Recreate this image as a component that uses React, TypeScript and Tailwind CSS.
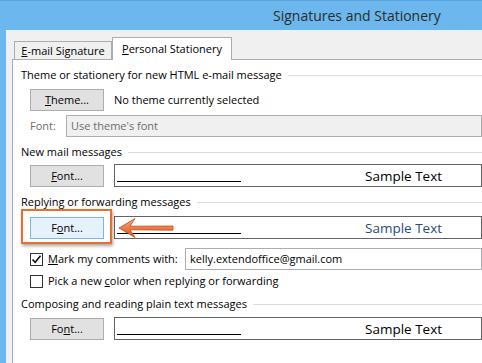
import React from 'react';

const Btn = ({ children, hot = false }: { children: React.ReactNode; hot?: boolean }) => (
  <div
    className={
      hot
        ? 'w-[74px] h-[22px] flex items-center justify-center border border-[#7eb4ea] bg-[#e5f1fb] text-black'
        : 'w-[74px] h-[22px] flex items-center justify-center border border-[#adadad] bg-[#e1e1e1] text-black'
    }
  >
    {children}
  </div>
);

const Heading = ({ children }: { children: React.ReactNode }) => (
  <div className="flex items-center h-[16px] pl-[8px]">
    <span className="whitespace-nowrap pr-[6px]">{children}</span>
    <div className="flex-1 h-px bg-[#dcdcdc]" />
  </div>
);

const Sample = ({ color = 'text-black' }: { color?: string }) => (
  <div className="flex-1 h-[23px] border border-[#646464] relative flex items-center">
    <div className="absolute left-[2px] top-[16px] w-[124px] h-px bg-black" />
    <span className={`ml-[250px] text-[13.5px] leading-[18px] ${color}`}>Sample Text</span>
  </div>
);

const Check = ({ checked }: { checked: boolean }) => (
  <div className="w-[13px] h-[13px] shrink-0 border border-[#333] bg-white flex items-center justify-center">
    {checked && (
      <svg width="11" height="11" viewBox="0 0 11 11">
        <path d="M1.5 5.5 L4.2 8.3 L9.5 1.8" fill="none" stroke="#111" strokeWidth="1.6" />
      </svg>
    )}
  </div>
);

export default function App() {
  return (
    <div className="w-[482px] h-[363px] overflow-hidden bg-[#6cb8ee] flex flex-col text-[11px] leading-[16px] text-black font-['Open_Sans',sans-serif] relative">
      {/* title bar */}
      <div className="h-[30px] shrink-0 border-t border-[#5aa3dc] flex items-center pl-[273px]">
        <span className="text-[14px] leading-[18px] text-[#2b2b2b] whitespace-nowrap">Signatures and Stationery</span>
      </div>

      <div className="flex-1 ml-[6px] bg-[#f0f0f0] pl-[6px] pt-[7px] flex flex-col">
        {/* tabs */}
        <div className="h-[22px] flex items-end relative z-10">
          <div className="ml-[2px] w-[98px] h-[18px] border border-b-0 border-[#adadad] bg-[#f0f0f0] flex items-center justify-center">
            <span><u>E</u>-mail Signature</span>
          </div>
          <div className="w-[120px] h-[23px] -mb-px border border-b-0 border-[#adadad] bg-white flex items-center justify-center">
            <span><u>P</u>ersonal Stationery</span>
          </div>
        </div>

        {/* panel */}
        <div className="flex-1 bg-white border-t border-l border-[#adadad] pt-[7px] flex flex-col">
          <Heading>Theme or stationery for new HTML e-mail message</Heading>

          <div className="flex items-center mt-[6px] pl-[17px]">
            <Btn><span><u>T</u>heme...</span></Btn>
            <span className="ml-[10px]">No theme currently selected</span>
          </div>

          <div className="flex items-center mt-[4px] pl-[17px]">
            <span className="text-[#6d6d6d] w-[36px]">Font:</span>
            <div className="flex-1 h-[22px] border border-[#adadad] bg-[#f0f0f0] flex items-center pl-[4px] text-[#6d6d6d]">
              Use theme's font
            </div>
          </div>

          <div className="mt-[7px]">
            <Heading>New mail messages</Heading>
          </div>
          <div className="flex items-center mt-[4px] pl-[17px]">
            <Btn><span><u>F</u>ont...</span></Btn>
            <div className="w-[10px]" />
            <Sample />
          </div>

          <div className="mt-[7px]">
            <Heading>Replying or forwarding messages</Heading>
          </div>
          <div className="flex items-center mt-[6px] pl-[17px] relative">
            <Btn hot><span>F<u>o</u>nt...</span></Btn>
            <div className="w-[10px]" />
            <Sample color="text-[#2a4a78]" />
            {/* callout */}
            <div className="absolute left-[8px] -top-[7px] w-[91px] h-[35px] border-2 border-[#e8702e] shadow-[1px_2px_3px_rgba(0,0,0,0.35)]" />
            <svg className="absolute left-[104px] top-[0px]" width="60" height="24" viewBox="0 0 60 24">
              <defs>
                <linearGradient id="ar" x1="0" y1="0" x2="0" y2="1">
                  <stop offset="0" stopColor="#f6a878" />
                  <stop offset="1" stopColor="#d9531c" />
                </linearGradient>
              </defs>
              <path d="M2 12 L18 2.5 L13 10.2 L56 10 L56 14.2 L13 13.8 L18 21.5 Z" fill="url(#ar)" stroke="#c94a16" strokeWidth="0.8" strokeLinejoin="round" />
            </svg>
          </div>

          <div className="flex items-center mt-[9px] pl-[17px]">
            <Check checked />
            <span className="ml-[5px] w-[137px] whitespace-nowrap"><u>M</u>ark my comments with:</span>
            <div className="flex-1 h-[22px] border border-[#abadb3] flex items-center pl-[4px]">
              kelly.extendoffice@gmail.com
            </div>
          </div>

          <div className="flex items-center mt-[3px] pl-[17px] h-[16px]">
            <Check checked={false} />
            <span className="ml-[5px] whitespace-nowrap">Pick a new <u>c</u>olor when replying or forwarding</span>
          </div>

          <div className="mt-[7px]">
            <Heading>Composing and reading plain text messages</Heading>
          </div>
          <div className="flex items-center mt-[5px] pl-[17px]">
            <Btn><span>Fo<u>n</u>t...</span></Btn>
            <div className="w-[10px]" />
            <Sample />
          </div>
        </div>
      </div>
    </div>
  );
}
